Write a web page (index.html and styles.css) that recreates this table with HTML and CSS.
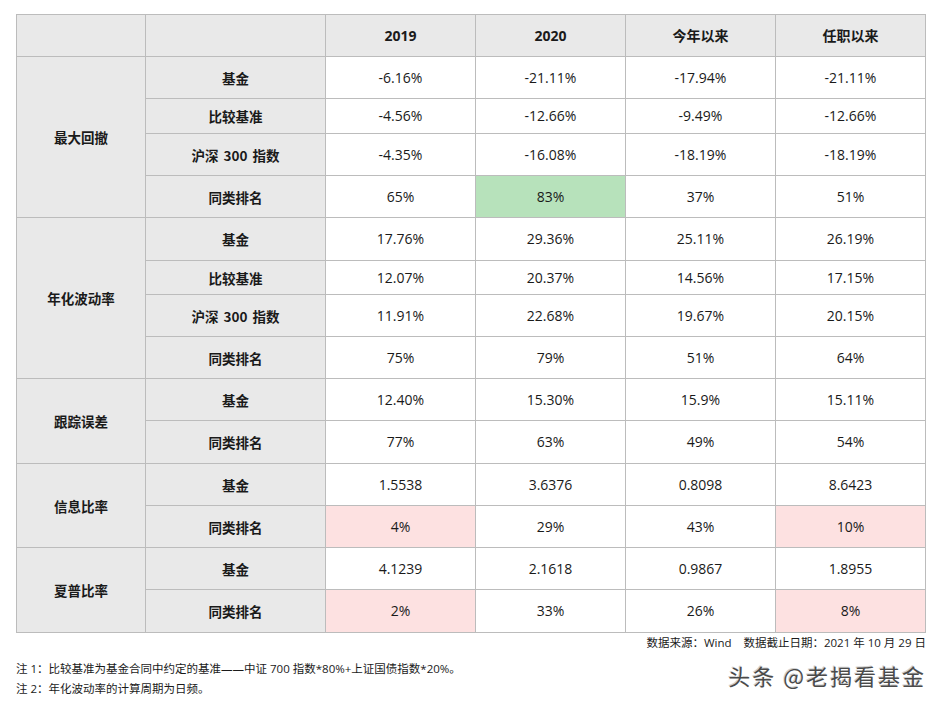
FILE: index.html
```html
<!DOCTYPE html>
<html lang="zh-CN">
<head>
<meta charset="utf-8">
<title>基金指标</title>
<link rel="stylesheet" href="styles.css">
</head>
<body>
<div class="page">
  <table class="grid">
    <colgroup>
      <col class="c-group"><col class="c-label"><col class="c-val"><col class="c-val"><col class="c-val"><col class="c-val">
    </colgroup>
    <thead>
      <tr class="r-head">
        <th class="hd"></th><th class="hd"></th><th class="hd">2019</th><th class="hd">2020</th><th class="hd">今年以来</th><th class="hd">任职以来</th>
      </tr>
    </thead>
    <tbody>
      <tr class="r"><th class="grp" rowspan="4">最大回撤</th><th class="lbl">基金</th><td>-6.16%</td><td>-21.11%</td><td>-17.94%</td><td>-21.11%</td></tr>
      <tr class="r-s"><th class="lbl">比较基准</th><td>-4.56%</td><td>-12.66%</td><td>-9.49%</td><td>-12.66%</td></tr>
      <tr class="r"><th class="lbl">沪深 300 指数</th><td>-4.35%</td><td>-16.08%</td><td>-18.19%</td><td>-18.19%</td></tr>
      <tr class="r"><th class="lbl">同类排名</th><td>65%</td><td class="good">83%</td><td>37%</td><td>51%</td></tr>

      <tr class="r-t"><th class="grp" rowspan="4">年化波动率</th><th class="lbl">基金</th><td>17.76%</td><td>29.36%</td><td>25.11%</td><td>26.19%</td></tr>
      <tr class="r-s2"><th class="lbl">比较基准</th><td>12.07%</td><td>20.37%</td><td>14.56%</td><td>17.15%</td></tr>
      <tr class="r"><th class="lbl">沪深 300 指数</th><td>11.91%</td><td>22.68%</td><td>19.67%</td><td>20.15%</td></tr>
      <tr class="r"><th class="lbl">同类排名</th><td>75%</td><td>79%</td><td>51%</td><td>64%</td></tr>

      <tr class="r"><th class="grp" rowspan="2">跟踪误差</th><th class="lbl">基金</th><td>12.40%</td><td>15.30%</td><td>15.9%</td><td>15.11%</td></tr>
      <tr class="r-t"><th class="lbl">同类排名</th><td>77%</td><td>63%</td><td>49%</td><td>54%</td></tr>

      <tr class="r"><th class="grp" rowspan="2">信息比率</th><th class="lbl">基金</th><td>1.5538</td><td>3.6376</td><td>0.8098</td><td>8.6423</td></tr>
      <tr class="r"><th class="lbl">同类排名</th><td class="bad">4%</td><td>29%</td><td>43%</td><td class="bad">10%</td></tr>

      <tr class="r"><th class="grp" rowspan="2">夏普比率</th><th class="lbl">基金</th><td>4.1239</td><td>2.1618</td><td>0.9867</td><td>1.8955</td></tr>
      <tr class="r-t"><th class="lbl">同类排名</th><td class="bad">2%</td><td>33%</td><td>26%</td><td class="bad">8%</td></tr>
    </tbody>
  </table>
  <div class="source">数据来源：Wind&nbsp;&nbsp;&nbsp;&nbsp;数据截止日期：2021 年 10 月 29 日</div>
  <div class="notes">
    <p>注 1：比较基准为基金合同中约定的基准——中证 700 指数*80%+上证国债指数*20%。</p>
    <p>注 2：年化波动率的计算周期为日频。</p>
  </div>
  <div class="watermark">头条 @老揭看基金</div>
</div>
</body>
</html>
```

FILE: styles.css
```css
html, body {
  margin: 0;
  padding: 0;
  background: #ffffff;
}

.page {
  position: relative;
  width: 945px;
  height: 708px;
  padding: 14px 0 0 16px;
  box-sizing: border-box;
  font-family: "Open Sans", "Noto Sans CJK SC", sans-serif;
  color: #1a1a1a;
}

.grid {
  border-collapse: collapse;
  table-layout: fixed;
  width: 910px;
  font-size: 14px;
}

.c-group { width: 129px; }
.c-label { width: 180px; }
.c-val { width: 150px; }

.grid th,
.grid td {
  border: 1px solid #bcbcbc;
  padding: 0;
  text-align: center;
  vertical-align: middle;
  line-height: 18px;
}

.grid td {
  font-weight: 400;
  background: #ffffff;
}

.grid th {
  font-family: "Noto Sans CJK SC", sans-serif;
  font-weight: 700;
  font-size: 13.5px;
  background: #e9e9e9;
}

.grid th.lbl {
  word-spacing: 2px;
}

.grid th.hd {
  font-family: "Open Sans", "Noto Sans CJK SC", sans-serif;
  font-size: 14px;
}

.r-head { height: 42px; }
.r { height: 42px; }
.r-t { height: 43px; }
.r-s { height: 35px; }
.r-s2 { height: 34px; }

.grid td.good { background: #b7e2bb; }
.grid td.bad { background: #fde1e1; }

.source {
  width: 910px;
  text-align: right;
  font-size: 11.5px;
  line-height: 20px;
  margin-top: 0;
  color: #1a1a1a;
  font-family: "Open Sans", "Noto Sans CJK SC", sans-serif;
}

.notes {
  margin-top: 6px;
  font-size: 11.5px;
  color: #1a1a1a;
}

.notes p {
  margin: 0;
  line-height: 20px;
}

.watermark {
  position: absolute;
  right: 19px;
  top: 661px;
  font-family: "Noto Sans CJK SC", sans-serif;
  font-size: 22px;
  font-weight: 400;
  line-height: 28px;
  color: #4a4a4a;
  text-shadow: 1px 1px 0 #ffffff, -1px -1px 0 #d0d0d0;
  letter-spacing: 2px;
}
```
